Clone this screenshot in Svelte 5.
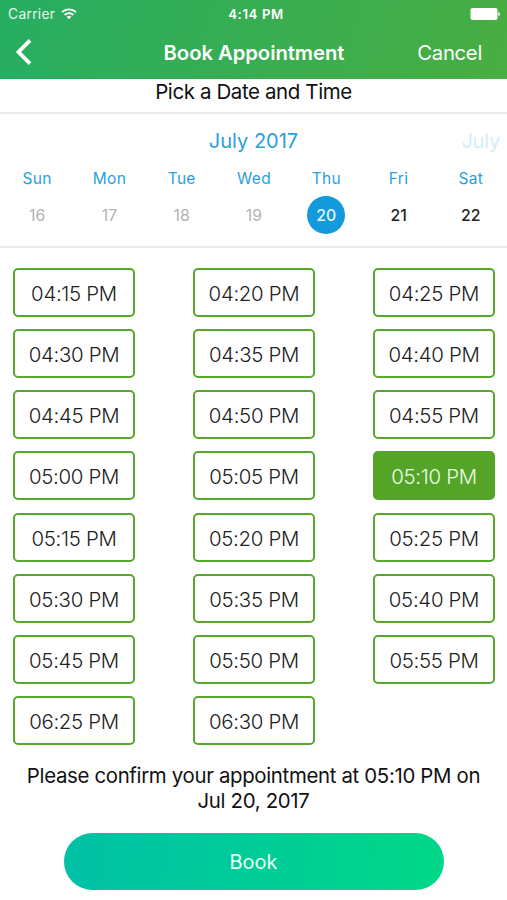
<script lang="ts">
  type Day = { name: string; date: number; past?: boolean };

  const days: Day[] = [
    { name: 'Sun', date: 16, past: true },
    { name: 'Mon', date: 17, past: true },
    { name: 'Tue', date: 18, past: true },
    { name: 'Wed', date: 19, past: true },
    { name: 'Thu', date: 20 },
    { name: 'Fri', date: 21 },
    { name: 'Sat', date: 22 }
  ];

  const slots = [
    '04:15 PM', '04:20 PM', '04:25 PM',
    '04:30 PM', '04:35 PM', '04:40 PM',
    '04:45 PM', '04:50 PM', '04:55 PM',
    '05:00 PM', '05:05 PM', '05:10 PM',
    '05:15 PM', '05:20 PM', '05:25 PM',
    '05:30 PM', '05:35 PM', '05:40 PM',
    '05:45 PM', '05:50 PM', '05:55 PM',
    '06:25 PM', '06:30 PM'
  ];

  let selectedDate = $state(20);
  let selectedSlot = $state('05:10 PM');
</script>

<div class="screen">
  <header>
    <div class="status">
      <span class="carrier">
        Carrier
        <svg width="16" height="12" viewBox="0 0 16 12" fill="none" stroke="#fff" stroke-width="1.7">
          <path d="M1 4.2a10 10 0 0 1 14 0" />
          <path d="M3.6 6.9a6.3 6.3 0 0 1 8.8 0" />
          <path d="M5.6 8.8a3.6 3.6 0 0 1 4.8 0L8 11.3z" fill="#fff" stroke="none" />
        </svg>
      </span>
      <span class="clock">4:14 PM</span>
      <svg class="battery" width="31" height="12" viewBox="0 0 31 12" fill="#fff">
        <rect x="0.5" y="0" width="27" height="12" rx="2" />
        <path d="M28.3 4c2.2.6 2.2 3.6 0 4.2z" />
      </svg>
    </div>
    <nav>
      <button class="back" aria-label="Back">
        <svg width="18" height="28" viewBox="0 0 18 28" fill="none" stroke="#fff" stroke-width="3.8">
          <path d="M16 2.3 4.5 14l11.5 11.7" />
        </svg>
      </button>
      <h1>Book Appointment</h1>
      <button class="cancel">Cancel</button>
    </nav>
  </header>

  <h2>Pick a Date and Time</h2>

  <section class="calendar">
    <div class="months">
      <span class="current">July 2017</span>
      <span class="next">July</span>
    </div>
    <div class="week">
      {#each days as day}
        <div class="day">
          <span class="name">{day.name}</span>
          <button
            class="date"
            class:past={day.past}
            class:selected={day.date === selectedDate}
            disabled={day.past}
            onclick={() => (selectedDate = day.date)}
          >{day.date}</button>
        </div>
      {/each}
    </div>
  </section>

  <div class="slots">
    {#each slots as slot}
      <button class="slot" class:selected={slot === selectedSlot} onclick={() => (selectedSlot = slot)}>
        {slot}
      </button>
    {/each}
  </div>

  <p class="confirm">Please confirm your appointment at {selectedSlot} on Jul {selectedDate}, 2017</p>
  <button class="book">Book</button>
</div>

<style>
  :global(body) {
    margin: 0;
    background: #fff;
  }
  .screen {
    width: 507px;
    height: 900px;
    overflow: hidden;
    display: flex;
    flex-direction: column;
    background: #fff;
    color: #111;
    font-family: Inter, Roboto, sans-serif;
  }
  button {
    margin: 0;
    padding: 0;
    border: none;
    background: none;
    font: inherit;
    color: inherit;
  }
  header {
    height: 79px;
    flex: none;
    color: #fff;
    background: linear-gradient(108deg, #26ae62, #49ad42);
  }
  .status {
    display: grid;
    grid-template-columns: 1fr auto 1fr;
    align-items: center;
    height: 27px;
    padding: 0 6px 0 8px;
    font-size: 13px;
  }
  .carrier {
    display: flex;
    align-items: center;
    gap: 6px;
    font-size: 13.8px;
    letter-spacing: 0.3px;
    color: #e2f8e9;
  }
  .clock {
    padding-left: 3px;
    font-weight: 600;
    font-size: 13.2px;
    letter-spacing: 0.6px;
  }
  .battery {
    justify-self: end;
  }
  nav {
    display: grid;
    grid-template-columns: 1fr auto 1fr;
    align-items: center;
    height: 51px;
    padding: 0 25px 0 14px;
  }
  .back {
    display: flex;
    justify-self: start;
    margin-bottom: 1px;
  }
  h1 {
    margin: 0 -6px 0 6px;
    font-size: 20.3px;
    font-weight: 600;
    letter-spacing: -0.06px;
  }
  .cancel {
    justify-self: end;
    font-size: 20.3px;
    letter-spacing: -0.3px;
  }
  h2 {
    height: 33px;
    flex: none;
    margin: 0;
    font-size: 20.5px;
    line-height: 26px;
    font-weight: 400;
    letter-spacing: -0.4px;
    text-align: center;
  }
  .calendar {
    height: 132px;
    flex: none;
    border-top: 2px solid #ebebeb;
    border-bottom: 2px solid #ebebeb;
    color: #2a9fdc;
  }
  .months {
    display: grid;
    grid-template-columns: 1fr auto 1fr;
    padding: 14px 8px 0;
    font-size: 20px;
    line-height: 26px;
  }
  .current {
    grid-column: 2;
  }
  .next {
    justify-self: end;
    margin-right: -1px;
    letter-spacing: -0.2px;
    color: #d5edf9;
  }
  .week {
    display: grid;
    grid-template-columns: repeat(7, 1fr);
    padding: 15px 0 0 1px;
  }
  .day {
    display: flex;
    flex-direction: column;
    align-items: center;
    gap: 7px;
  }
  .name {
    font-size: 15.5px;
    line-height: 20px;
    letter-spacing: 0.3px;
  }
  .date {
    width: 38px;
    height: 38px;
    border-radius: 50%;
    padding-top: 1px;
    font-size: 15.8px;
    font-weight: 500;
    color: #222;
  }
  .date.past {
    color: #b3b3b3;
    font-weight: 400;
  }
  .date.selected {
    background: #129adc;
    color: #e6f6ff;
  }
  .slots {
    display: grid;
    grid-template-columns: repeat(3, 122px);
    grid-auto-rows: 49px;
    justify-content: space-between;
    row-gap: 12.15px;
    padding: 20px 12px 0 13px;
  }
  .slot {
    border: 2px solid #58a82f;
    border-radius: 5px;
    padding-top: 2px;
    font-size: 20.4px;
    font-weight: 300;
    letter-spacing: -0.3px;
    color: #222;
  }
  .slot.selected {
    background: #53a427;
    border-color: #53a427;
    color: #effbe8;
  }
  .confirm {
    margin: 18px 22px 0;
    font-size: 20.4px;
    line-height: 25px;
    letter-spacing: -0.33px;
    text-align: center;
  }
  .book {
    width: 380px;
    height: 57px;
    flex: none;
    margin: 20px auto 0;
    border-radius: 29px;
    padding-top: 2px;
    background: linear-gradient(100deg, #00c0a6, #00d888);
    color: #e8fff6;
    font-size: 20px;
  }
</style>
